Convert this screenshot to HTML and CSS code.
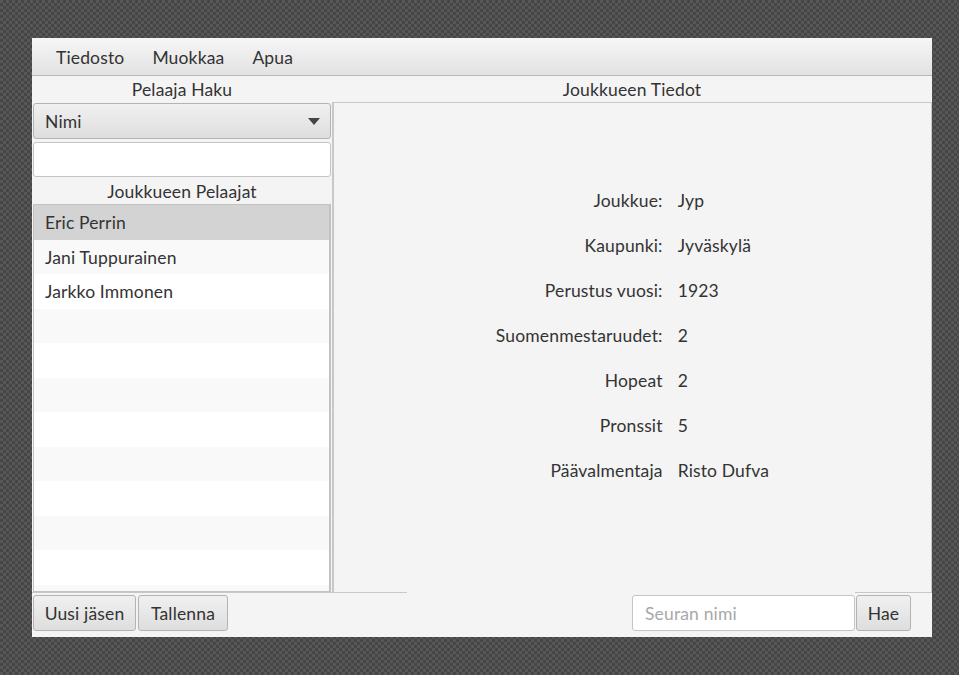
FILE: index.html
```html
<!DOCTYPE html>
<html lang="fi">
<head>
<meta charset="utf-8">
<title>Joukkueet</title>
<link rel="stylesheet" href="styles.css">
</head>
<body>
<div class="window">
  <div class="menubar">
    <span class="menu-item">Tiedosto</span>
    <span class="menu-item">Muokkaa</span>
    <span class="menu-item">Apua</span>
  </div>
  <div class="main">
    <div class="left">
      <div class="title">Pelaaja Haku</div>
      <div class="combo">
        <span>Nimi</span>
        <svg class="arrow" width="12" height="7" viewBox="0 0 12 7"><polygon points="0,0 12,0 6,7" fill="#444"/></svg>
      </div>
      <div class="textfield"></div>
      <div class="title sub">Joukkueen Pelaajat</div>
      <div class="list">
        <div class="row selected">Eric Perrin</div>
        <div class="row odd">Jani Tuppurainen</div>
        <div class="row">Jarkko Immonen</div>
        <div class="row odd"></div>
        <div class="row"></div>
        <div class="row odd"></div>
        <div class="row"></div>
        <div class="row odd"></div>
        <div class="row"></div>
        <div class="row odd"></div>
        <div class="row"></div>
        <div class="row odd"></div>
      </div>
    </div>
    <div class="right">
      <div class="title">Joukkueen Tiedot</div>
      <div class="pane">
        <div class="details">
          <span class="lbl">Joukkue:</span><span class="val">Jyp</span>
          <span class="lbl">Kaupunki:</span><span class="val">Jyväskylä</span>
          <span class="lbl">Perustus vuosi:</span><span class="val">1923</span>
          <span class="lbl">Suomenmestaruudet:</span><span class="val">2</span>
          <span class="lbl">Hopeat</span><span class="val">2</span>
          <span class="lbl">Pronssit</span><span class="val">5</span>
          <span class="lbl">Päävalmentaja</span><span class="val">Risto Dufva</span>
        </div>
      </div>
    </div>
  </div>
  <div class="bottom">
    <div class="bottom-left">
      <button class="btn btn-new">Uusi jäsen</button>
      <button class="btn btn-save">Tallenna</button>
    </div>
    <div class="bottom-right">
      <div class="search">Seuran nimi</div>
      <div class="hae-wrap"><button class="btn btn-hae">Hae</button></div>
    </div>
  </div>
</div>
</body>
</html>
```

FILE: styles.css
```css
html, body {
  margin: 0;
  padding: 0;
}
body {
  width: 959px;
  height: 675px;
  background-color: #4e4e4e;
  background-image: repeating-conic-gradient(#464646 0 25%, #575757 0 50%);
  background-size: 6px 6px;
  font-family: "Lato", "Open Sans", sans-serif;
  font-size: 17.5px;
  letter-spacing: 0.15px;
  color: #333333;
  overflow: hidden;
  padding-top: 38px;
  box-sizing: border-box;
}
.window {
  margin-left: 32px;
  width: 900px;
  height: 599px;
  background: #f4f4f4;
  display: flex;
  flex-direction: column;
}
.menubar {
  height: 37px;
  flex: none;
  border-bottom: 1px solid #b8b8b8;
  background: linear-gradient(#f6f6f6, #e2e2e2);
  display: flex;
  align-items: center;
  padding-left: 10px;
  padding-top: 1px;
  box-sizing: content-box;
}
.menubar {
  height: 36px;
}
.menu-item {
  padding: 0 14px;
}
.main {
  display: grid;
  grid-template-columns: 300px 600px;
  height: 516px;
  flex: none;
}
.title {
  height: 26px;
  line-height: 28px;
  text-align: center;
}
.left {
  display: flex;
  flex-direction: column;
  min-height: 0;
}
.combo {
  margin: 1px 1px 0 1px;
  height: 36px;
  flex: none;
  box-sizing: border-box;
  border: 1px solid #b3b3b3;
  border-radius: 3px;
  background: linear-gradient(#f0f0f0, #dedede);
  display: flex;
  align-items: center;
  justify-content: space-between;
  padding: 0 10px 0 11px;
}
.arrow {
  margin-top: 1px;
}
.textfield {
  margin: 3px 1px 0 1px;
  height: 35px;
  flex: none;
  box-sizing: border-box;
  border: 1px solid #c4c4c4;
  border-radius: 3px;
  background: #ffffff;
}
.title.sub {
  height: 27px;
  line-height: 29px;
  flex: none;
}
.list {
  margin: 0 1px;
  flex: 1;
  min-height: 0;
  border: 1px solid #c2c2c2;
  border-right-width: 2px;
  background: #ffffff;
  overflow: hidden;
}
.row {
  height: 34.5px;
  line-height: 36px;
  padding-left: 11px;
  background: #ffffff;
}
.row.odd {
  background: #f9f9f9;
}
.row.selected {
  background: #d3d3d3;
}
.right {
  display: flex;
  flex-direction: column;
  min-height: 0;
}
.pane {
  flex: 1;
  border: 1px solid #c8c8c8;
  border-bottom: none;
  border-left-width: 2px;
  padding-top: 75px;
  box-sizing: border-box;
}
.details {
  display: grid;
  grid-template-columns: auto auto;
  justify-content: center;
  column-gap: 15px;
  row-gap: 0;
}
.lbl, .val {
  height: 45px;
  line-height: 45px;
}
.lbl {
  text-align: right;
}
.bottom {
  flex: 1;
  display: flex;
  justify-content: space-between;
}
.bottom-left {
  width: 375px;
  border-top: 1px solid #c8c8c8;
  display: flex;
  align-items: flex-start;
  padding-top: 2px;
  padding-left: 1px;
  gap: 2px;
  box-sizing: border-box;
}
.btn {
  font-family: inherit;
  font-size: 17.5px;
  letter-spacing: 0.15px;
  color: #333333;
  height: 36px;
  border: 1px solid #b3b3b3;
  border-radius: 3px;
  background: linear-gradient(#f0f0f0, #dedede);
  padding: 0 8px;
  margin: 0;
}
.btn-new { width: 103px; }
.btn-save { width: 90px; }
.bottom-right {
  display: flex;
  align-items: flex-start;
  padding-right: 22px;
}
.search {
  margin-top: 3px;
  width: 223px;
  height: 36px;
  line-height: 35px;
  box-sizing: border-box;
  border: 1px solid #c4c4c4;
  border-radius: 3px;
  background: #ffffff;
  color: #a8a8a8;
  padding-left: 12px;
}
.hae-wrap {
  border-top: 1px solid #c8c8c8;
  padding-top: 2px;
  padding-left: 1px;
  width: 77px;
  box-sizing: border-box;
  margin-right: -22px;
}
.btn-hae {
  width: 55px;
}
```
